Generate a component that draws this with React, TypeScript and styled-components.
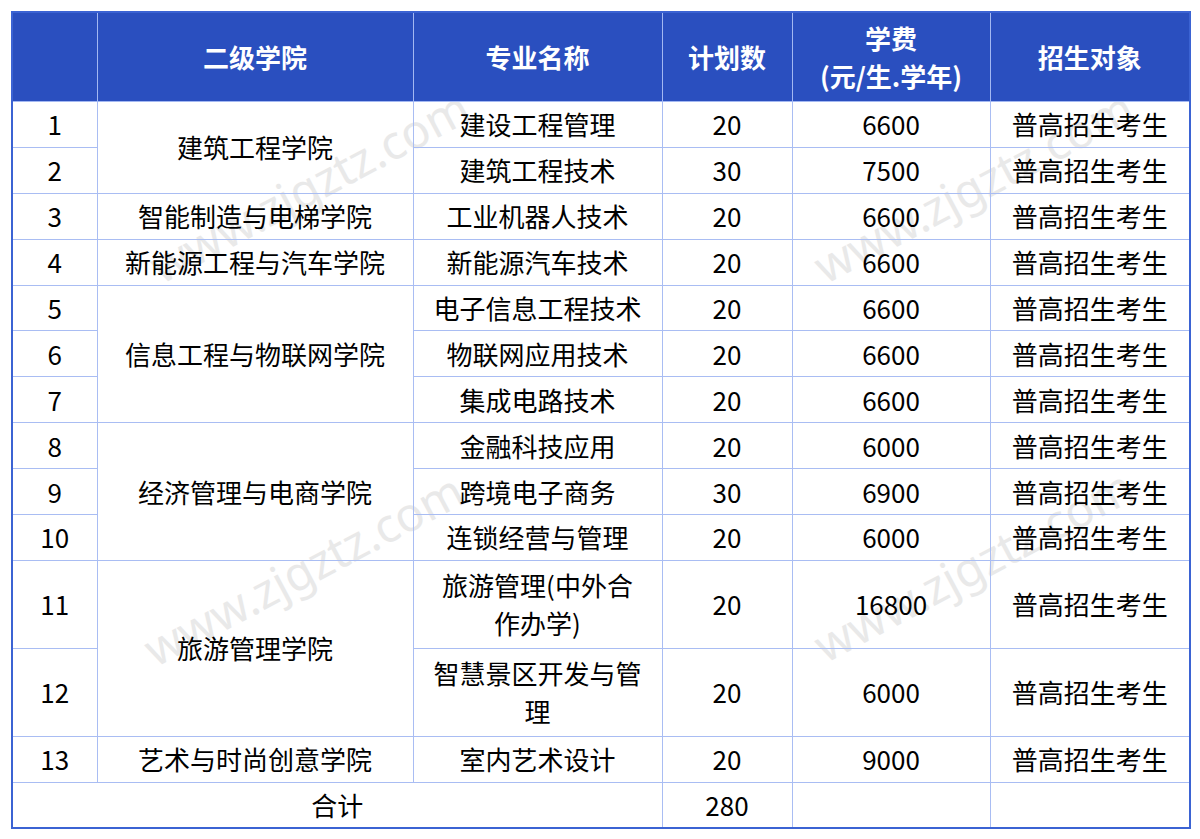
import React from "react";
import styled, { createGlobalStyle } from "styled-components";

const Global = createGlobalStyle`
  html, body { margin: 0; padding: 0; background: #ffffff; }
  body { font-family: "Noto Sans CJK SC", "Noto Sans", sans-serif; }
`;

const Page = styled.div`
  padding: 11px 0 0 11px;
  background: #ffffff;
  width: 1200px;
  height: 839px;
  box-sizing: border-box;
`;

const Wrap = styled.div`
  position: relative;
  width: 1178px;
`;

const Watermark = styled.div`
  position: absolute;
  transform: translate(-50%, -50%) rotate(-28deg);
  font-family: "Noto Sans", sans-serif;
  font-size: 47px;
  color: #e9e9e9;
  white-space: nowrap;
  pointer-events: none;
  z-index: 0;
`;

const Table = styled.table`
  position: relative;
  z-index: 1;
  width: 1178px;
  border-collapse: collapse;
  table-layout: fixed;
  border: 2px solid #3b63d3;
  font-family: "Noto Sans CJK SC", "Noto Sans", sans-serif;
`;

const HeadCell = styled.th`
  background: #2a4fbf;
  color: #ffffff;
  font-size: 26px;
  font-weight: 700;
  line-height: 38px;
  height: 88px;
  padding: 0;
  text-align: center;
  vertical-align: middle;
  border: 1px solid #a3b8f2;
`;

const Row = styled.tr<{ $tall?: boolean }>`
  height: ${(p) => (p.$tall ? "88px" : "45.9px")};
`;

const Cell = styled.td`
  font-size: 26px;
  line-height: 38px;
  color: #000000;
  text-align: center;
  vertical-align: middle;
  padding: 0;
  border: 1px solid #a9bdf3;
  background: transparent;
  white-space: nowrap;
`;

type Item = {
  no: number;
  college?: { name: string; span: number };
  major: React.ReactNode;
  plan: number;
  fee: number;
  tall?: boolean;
};

const items: Item[] = [
  { no: 1, college: { name: "建筑工程学院", span: 2 }, major: "建设工程管理", plan: 20, fee: 6600 },
  { no: 2, major: "建筑工程技术", plan: 30, fee: 7500 },
  { no: 3, college: { name: "智能制造与电梯学院", span: 1 }, major: "工业机器人技术", plan: 20, fee: 6600 },
  { no: 4, college: { name: "新能源工程与汽车学院", span: 1 }, major: "新能源汽车技术", plan: 20, fee: 6600 },
  { no: 5, college: { name: "信息工程与物联网学院", span: 3 }, major: "电子信息工程技术", plan: 20, fee: 6600 },
  { no: 6, major: "物联网应用技术", plan: 20, fee: 6600 },
  { no: 7, major: "集成电路技术", plan: 20, fee: 6600 },
  { no: 8, college: { name: "经济管理与电商学院", span: 3 }, major: "金融科技应用", plan: 20, fee: 6000 },
  { no: 9, major: "跨境电子商务", plan: 30, fee: 6900 },
  { no: 10, major: "连锁经营与管理", plan: 20, fee: 6000 },
  {
    no: 11,
    college: { name: "旅游管理学院", span: 2 },
    major: (
      <>
        旅游管理(中外合
        <br />
        作办学)
      </>
    ),
    plan: 20,
    fee: 16800,
    tall: true,
  },
  {
    no: 12,
    major: (
      <>
        智慧景区开发与管
        <br />理
      </>
    ),
    plan: 20,
    fee: 6000,
    tall: true,
  },
  { no: 13, college: { name: "艺术与时尚创意学院", span: 1 }, major: "室内艺术设计", plan: 20, fee: 9000 },
];

const marks = [
  { x: 298, y: 175 },
  { x: 962, y: 175 },
  { x: 292, y: 558 },
  { x: 962, y: 554 },
];

export default function App() {
  return (
    <>
      <Global />
      <Page>
        <Wrap>
          {marks.map((m, i) => (
            <Watermark key={i} style={{ left: m.x, top: m.y }}>
              www.zjgztz.com
            </Watermark>
          ))}
          <Table>
            <colgroup>
              <col style={{ width: 85 }} />
              <col style={{ width: 316 }} />
              <col style={{ width: 249 }} />
              <col style={{ width: 130 }} />
              <col style={{ width: 198 }} />
              <col style={{ width: 200 }} />
            </colgroup>
            <thead>
              <tr>
                <HeadCell />
                <HeadCell>二级学院</HeadCell>
                <HeadCell>专业名称</HeadCell>
                <HeadCell>计划数</HeadCell>
                <HeadCell>
                  学费
                  <br />
                  (元/生.学年)
                </HeadCell>
                <HeadCell>招生对象</HeadCell>
              </tr>
            </thead>
            <tbody>
              {items.map((it) => (
                <Row key={it.no} $tall={it.tall}>
                  <Cell>{it.no}</Cell>
                  {it.college && <Cell rowSpan={it.college.span}>{it.college.name}</Cell>}
                  <Cell>{it.major}</Cell>
                  <Cell>{it.plan}</Cell>
                  <Cell>{it.fee}</Cell>
                  <Cell>普高招生考生</Cell>
                </Row>
              ))}
              <Row>
                <Cell colSpan={3}>合计</Cell>
                <Cell>280</Cell>
                <Cell />
                <Cell />
              </Row>
            </tbody>
          </Table>
        </Wrap>
      </Page>
    </>
  );
}
